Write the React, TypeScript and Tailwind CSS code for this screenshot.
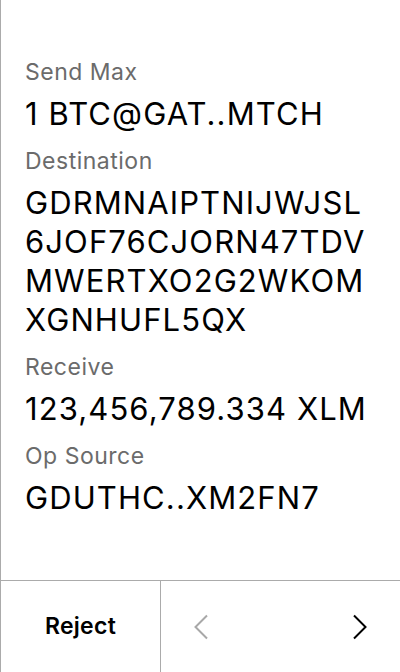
const rows: { label: string; value: string }[] = [
  { label: 'Send Max', value: '1 BTC@GAT..MTCH' },
  { label: 'Destination', value: 'GDRMNAIPTNIJWJSL6JOF76CJORN47TDVMWERTXO2G2WKOMXGNHUFL5QX' },
  { label: 'Receive', value: '123,456,789.334 XLM' },
  { label: 'Op Source', value: 'GDUTHC..XM2FN7' },
];

function Chevron({ dir, color }: { dir: 'left' | 'right'; color: string }) {
  return (
    <svg width="16" height="26" viewBox="0 0 16 26" fill="none">
      <path
        d={dir === 'left' ? 'M14 1.5 L2.5 13 L14 24.5' : 'M2 1.5 L13.5 13 L2 24.5'}
        stroke={color}
        strokeWidth="2"
      />
    </svg>
  );
}

export default function App() {
  return (
    <div className="h-[672px] w-[400px] flex flex-col bg-white border-l border-[#ababab] font-['Inter',sans-serif] text-black">
      <div className="flex-1 pl-[24px] pr-[25px] pt-[58px] flex flex-col gap-[14px]">
        {rows.map((r) => (
          <div key={r.label}>
            <div className="text-[23px] leading-[28px] tracking-[0.5px] text-[#6b6b6b]">{r.label}</div>
            <div className="mt-[8px] text-[31px] leading-[39px] tracking-[1.1px] break-all">{r.value}</div>
          </div>
        ))}
      </div>

      <div className="h-[92px] flex border-t border-[#ababab]">
        <button className="w-[160px] flex items-center justify-center text-[23px] tracking-[0.3px] font-semibold border-r border-[#ababab]">
          Reject
        </button>
        <div className="flex-1 flex items-center justify-between px-[32px]">
          <Chevron dir="left" color="#a8a8a8" />
          <Chevron dir="right" color="#000" />
        </div>
      </div>
    </div>
  );
}
